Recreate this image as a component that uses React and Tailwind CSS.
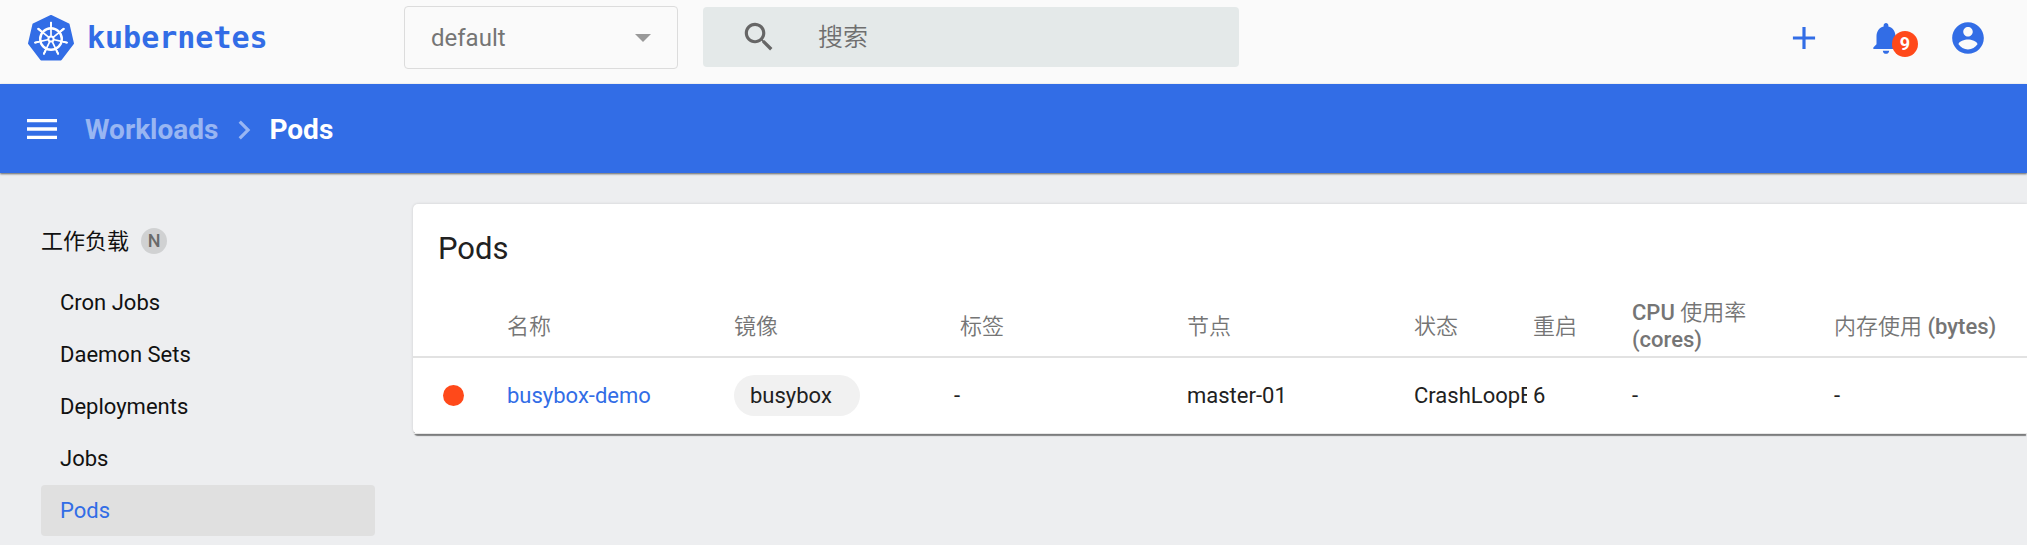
import React from "react";

const FONT = "font-[Roboto,'Noto_Sans_CJK_SC',sans-serif]";

function Icon({ d, className }) {
  return (
    <svg viewBox="0 0 24 24" className={className} fill="currentColor" aria-hidden="true">
      <path d={d} />
    </svg>
  );
}

const icons = {
  menu: "M3 18h18v-2H3v2zm0-5h18v-2H3v2zm0-7v2h18V6H3z",
  chevron: "M10 6L8.59 7.41 13.17 12l-4.58 4.59L10 18l6-6z",
  search:
    "M15.5 14h-.79l-.28-.27C15.41 12.59 16 11.11 16 9.5 16 5.91 13.09 3 9.5 3S3 5.91 3 9.5 5.91 16 9.5 16c1.61 0 3.09-.59 4.23-1.57l.27.28v.79l5 4.99L20.49 19l-4.99-5zm-6 0C7.01 14 5 11.99 5 9.5S7.01 5 9.5 5 14 7.01 14 9.5 11.99 14 9.5 14z",
  add: "M19 13h-6v6h-2v-6H5v-2h6V5h2v6h6v2z",
  bell:
    "M12 22c1.1 0 2-.9 2-2h-4c0 1.1.89 2 2 2zm6-6v-5c0-3.07-1.64-5.64-4.5-6.32V4c0-.83-.67-1.5-1.5-1.5s-1.5.67-1.5 1.5v.68C7.63 5.36 6 7.92 6 11v5l-2 2v1h16v-1l-2-2z",
  account:
    "M12 2C6.48 2 2 6.48 2 12s4.48 10 10 10 10-4.48 10-10S17.52 2 12 2zm0 3c1.66 0 3 1.34 3 3s-1.34 3-3 3-3-1.34-3-3 1.34-3 3-3zm0 14.2c-2.5 0-4.71-1.28-6-3.22.03-1.99 4-3.08 6-3.08 1.99 0 5.97 1.09 6 3.08-1.29 1.94-3.5 3.22-6 3.22z",
};

const SPOKES = Array.from({ length: 7 }, (_, i) => (i * 360) / 7);

function Logo() {
  return (
    <svg viewBox="0 0 48 48" className="size-12 shrink-0" aria-hidden="true">
      <path
        d="M24 2 L41.6 10.5 L46 29.5 L33.8 45.5 H14.2 L2 29.5 L6.4 10.5 Z"
        fill="#326de6"
        stroke="#326de6"
        strokeWidth="2"
        strokeLinejoin="round"
      />
      <g stroke="#fff" fill="none" strokeLinecap="round">
        <circle cx="24" cy="25" r="10.8" strokeWidth="2.4" />
        {SPOKES.map((a) => (
          <g key={a} transform={`rotate(${a} 24 25)`}>
            <path d="M24 21.5V8.6" strokeWidth="1.7" />
            <path d="M24 12V8.8" strokeWidth="2" />
          </g>
        ))}
      </g>
      <circle cx="24" cy="25" r="3.6" fill="#fff" />
      <circle cx="24" cy="25" r="1.6" fill="#326de6" />
    </svg>
  );
}

function Header() {
  return (
    <header className="flex h-[84px] items-start bg-[#fafafa] pl-[27px] pr-10">
      <a href="#/" className="flex h-[76px] w-[377px] shrink-0 items-center gap-3 text-[#326de6]">
        <Logo />
        <span className="font-['DejaVu_Sans_Mono',monospace] text-[30px] font-bold leading-none">kubernetes</span>
      </a>
      <div className="mt-[6px] grid w-[274px] shrink-0 items-center">
        <select
          aria-label="Namespace"
          className="col-start-1 row-start-1 h-[63px] appearance-none rounded border border-[#dcdcdc] bg-transparent pl-[26px] text-2xl text-[#757575]"
        >
          <option>default</option>
        </select>
        <svg
          viewBox="0 0 16 8"
          className="pointer-events-none col-start-1 row-start-1 mr-[27px] h-2 w-4 justify-self-end"
          aria-hidden="true"
        >
          <path d="M0 0h16L8 8z" fill="#999" />
        </svg>
      </div>
      <label className="ml-[25px] mt-[7px] flex h-[60px] w-[536px] items-center rounded bg-[#e4e9e9] pl-[37px]">
        <Icon d={icons.search} className="size-[38px] shrink-0 text-[#666]" />
        <input
          type="text"
          aria-label="搜索"
          placeholder="搜索"
          className="ml-10 min-w-0 flex-1 bg-transparent pt-[2px] text-[25px] font-[350] outline-none placeholder:text-[#6f6f6f]"
        />
      </label>
      <div className="ml-auto flex h-[75px] items-center gap-11 text-[#326de6]">
        <button type="button" aria-label="Create">
          <Icon d={icons.add} className="size-[38px]" />
        </button>
        <button type="button" aria-label="Notifications" className="relative">
          <Icon d={icons.bell} className="size-[38px]" />
          <span className="absolute left-[25px] top-3 flex size-[26px] items-center justify-center rounded-full bg-[#ff491a] text-lg font-bold leading-none text-white">
            9
          </span>
        </button>
        <button type="button" aria-label="Account">
          <Icon d={icons.account} className="size-[38px]" />
        </button>
      </div>
    </header>
  );
}

function Toolbar() {
  return (
    <nav className="relative flex h-[89px] items-center bg-[#326de6] pl-[22px] text-[28px] text-white shadow-[0_1px_2px_rgba(0,0,0,0.6)]">
      <button type="button" aria-label="Menu">
        <Icon d={icons.menu} className="size-10" />
      </button>
      <div className="ml-[23px] flex items-center pt-[3px] font-bold">
        <a href="#/workloads" className="text-white/50">
          Workloads
        </a>
        <Icon d={icons.chevron} className="ml-[7px] size-[38px] text-white/50" />
        <span className="ml-[6px]">Pods</span>
      </div>
    </nav>
  );
}

const sideItems = ["Cron Jobs", "Daemon Sets", "Deployments", "Jobs", "Pods"];

function Sidebar() {
  return (
    <aside className="w-[413px] shrink-0 pl-[41px] pr-[38px] text-[22px] text-[#111]">
      <h2 className="flex h-[104px] items-center gap-3 pt-[32px] font-normal">
        <a href="#/workloads">工作负载</a>
        <span className="flex size-[26px] items-center justify-center rounded-full bg-[#d0d1d2] text-lg font-medium leading-none text-[#6a6a6a]">
          N
        </span>
      </h2>
      <ul className="flex flex-col gap-px">
        {sideItems.map((t) => (
          <li key={t}>
            <a
              href={"#/" + t}
              className={
                "flex h-[51px] items-center rounded-sm pl-[19px] " + (t === "Pods" ? "bg-[#e0e0e0] text-[#326de6]" : "")
              }
            >
              {t}
            </a>
          </li>
        ))}
      </ul>
    </aside>
  );
}

function PodsCard() {
  return (
    <section className="mt-[31px] min-w-0 flex-1 self-start rounded-l-[5px] bg-white shadow-[0_3px_1px_-1px_rgba(0,0,0,0.45),0_0_3px_rgba(0,0,0,0.14)]">
      <h1 className="flex h-[91px] items-center pl-[25px] text-[31px] text-[#212121]">Pods</h1>
      <table className="w-full table-fixed text-left text-[22px] leading-[27px] text-[#212121]">
        <colgroup>
          <col className="w-[94px]" />
          <col className="w-[227px]" />
          <col className="w-[220px]" />
          <col className="w-[233px]" />
          <col className="w-[227px]" />
          <col className="w-[119px]" />
          <col className="w-[99px]" />
          <col className="w-[202px]" />
          <col />
        </colgroup>
        <thead>
          <tr className="h-[62px] border-b-2 border-[#e2e2e2] text-[#757575]">
            <th />
            <th className="pt-[2px] font-[350]">名称</th>
            <th className="pt-[2px] font-[350]">镜像</th>
            <th className="pl-[6px] pt-[2px] font-[350]">标签</th>
            <th className="pt-[2px] font-[350]">节点</th>
            <th className="pt-[2px] font-[350]">状态</th>
            <th className="pt-[2px] font-[350]">重启</th>
            <th className="font-medium">
              CPU <span className="font-[350]">使用率</span>
              <br />
              (cores)
            </th>
            <th className="whitespace-nowrap pt-[2px] font-medium">
              <span className="font-[350]">内存使用</span> (bytes)
            </th>
          </tr>
        </thead>
        <tbody>
          <tr className="h-[76px] border-b border-[#e8e8e8]">
            <td className="pl-[30px]">
              <div className="size-[21px] rounded-full bg-[#ff491a]" />
            </td>
            <td>
              <a href="#/pod/busybox-demo" className="text-[#326de6]">
                busybox-demo
              </a>
            </td>
            <td>
              <span className="flex h-[41px] w-fit items-center rounded-full bg-[#f1f1f1] pl-4 pr-7">busybox</span>
            </td>
            <td>-</td>
            <td>master-01</td>
            <td className="pr-[6px]">
              <div className="overflow-hidden whitespace-nowrap">CrashLoopBackOff</div>
            </td>
            <td>6</td>
            <td>-</td>
            <td>-</td>
          </tr>
        </tbody>
      </table>
    </section>
  );
}

export default function App() {
  return (
    <div className={"min-h-screen bg-[#edeef0] " + FONT}>
      <Header />
      <Toolbar />
      <main className="flex">
        <Sidebar />
        <PodsCard />
      </main>
    </div>
  );
}
